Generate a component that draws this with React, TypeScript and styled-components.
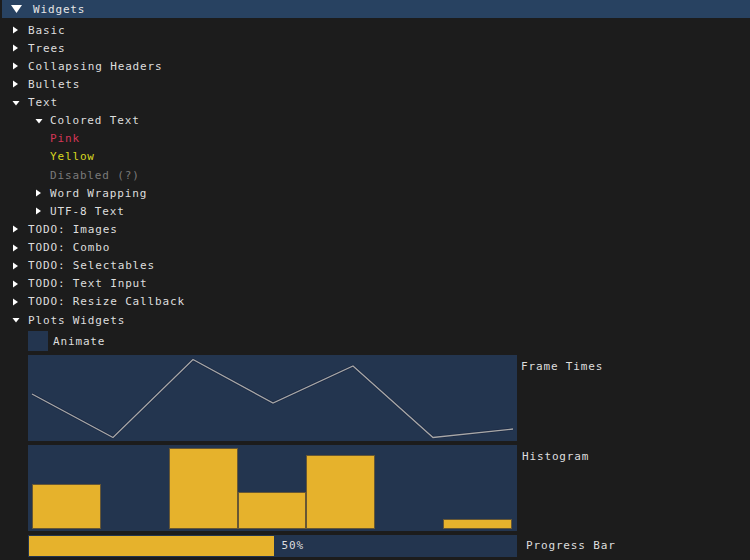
import React from "react";
import styled, { createGlobalStyle } from "styled-components";

const Global = createGlobalStyle`
  html, body { margin: 0; padding: 0; background: #1c1c1c; }
  body { width: 750px; height: 560px; overflow: hidden; }
`;

const Page = styled.div`
  width: 750px;
  height: 560px;
  background: #1c1c1c;
  color: #dedede;
  font-family: "DejaVu Sans Mono", "Liberation Mono", monospace;
  font-size: 11px;
  letter-spacing: 0.85px;
  display: flex;
  flex-direction: column;
  overflow: hidden;
`;

const HeaderBar = styled.div`
  height: 18px;
  margin-left: 2px;
  background: #284261;
  display: flex;
  align-items: center;
  padding-left: 9px;
  gap: 11px;
  color: #e6e6e6;
`;

const TreeList = styled.div`
  padding-top: 3px;
  display: flex;
  flex-direction: column;
`;

const TreeRow = styled.div<{ $indent: number }>`
  height: 18.125px;
  display: flex;
  align-items: center;
  padding-left: ${(p) => p.$indent}px;
  white-space: pre;
`;

const ArrowSlot = styled.span<{ $w: number }>`
  width: ${(p) => p.$w}px;
  height: 8px;
  display: flex;
  align-items: flex-start;
  flex-shrink: 0;
`;

const Label = styled.span<{ $color?: string }>`
  color: ${(p) => p.$color || "#dedede"};
`;

const CheckRow = styled.div`
  margin-top: 2px;
  height: 20px;
  display: flex;
  align-items: center;
  padding-left: 28px;
  gap: 5px;
`;

const CheckBox = styled.div`
  width: 20px;
  height: 20px;
  background: #23354f;
`;

const PlotRow = styled.div<{ $top: number }>`
  margin-top: ${(p) => p.$top}px;
  display: flex;
  padding-left: 28px;
`;

const PlotFrame = styled.div<{ $h: number }>`
  width: 489px;
  height: ${(p) => p.$h}px;
  background: #23354f;
  flex-shrink: 0;
  display: flex;
  align-items: center;
`;

const PlotLabel = styled.div<{ $pad: number; $top?: number }>`
  padding-left: ${(p) => p.$pad}px;
  padding-top: ${(p) => p.$top ?? 5}px;
  line-height: 14px;
  white-space: pre;
`;

const ProgressRow = styled(PlotRow)`
  align-items: center;
`;

const HistArea = styled.div`
  width: 100%;
  height: 100%;
  box-sizing: border-box;
  padding: 3px 5px 2px 4px;
  display: flex;
  align-items: flex-end;
`;

const HistCell = styled.div`
  flex: 1;
  height: 100%;
  display: flex;
  align-items: flex-end;
`;

const HistBar = styled.div`
  width: 100%;
  background: #e6b22c;
  box-shadow: inset 0 0 0 1px rgba(18, 26, 58, 0.6);
`;

const ProgressFill = styled.div`
  height: 20px;
  margin-left: 1px;
  background: #e6b22c;
  align-self: center;
`;

const ProgressText = styled.span`
  margin-left: 8px;
  color: #dedede;
`;

const RightArrow = () => (
  <svg width="8" height="8" viewBox="0 0 8 8">
    <polygon points="1,0.5 6,4 1,7.5" fill="#ffffff" />
  </svg>
);

const DownArrow = () => (
  <svg width="8" height="8" viewBox="0 0 8 8">
    <polygon points="0.5,2 7.5,2 4,6.5" fill="#ffffff" />
  </svg>
);

type Item = { text: string; level: 1 | 2; kind: "closed" | "open" | "leaf"; color?: string };

const items: Item[] = [
  { text: "Basic", level: 1, kind: "closed" },
  { text: "Trees", level: 1, kind: "closed" },
  { text: "Collapsing Headers", level: 1, kind: "closed" },
  { text: "Bullets", level: 1, kind: "closed" },
  { text: "Text", level: 1, kind: "open" },
  { text: "Colored Text", level: 2, kind: "open" },
  { text: "Pink", level: 2, kind: "leaf", color: "#d33656" },
  { text: "Yellow", level: 2, kind: "leaf", color: "#d6d620" },
  { text: "Disabled (?)", level: 2, kind: "leaf", color: "#7a7a7a" },
  { text: "Word Wrapping", level: 2, kind: "closed" },
  { text: "UTF-8 Text", level: 2, kind: "closed" },
  { text: "TODO: Images", level: 1, kind: "closed" },
  { text: "TODO: Combo", level: 1, kind: "closed" },
  { text: "TODO: Selectables", level: 1, kind: "closed" },
  { text: "TODO: Text Input", level: 1, kind: "closed" },
  { text: "TODO: Resize Callback", level: 1, kind: "closed" },
  { text: "Plots Widgets", level: 1, kind: "open" },
];

const linePoints = [
  [4, 39],
  [85, 82.5],
  [165, 4.5],
  [245, 48],
  [325, 11],
  [405, 82.5],
  [485, 74],
];

const histValues = [0.555, 0, 1.0, 0.456, 0.913, 0, 0.12];

export default function App() {
  const pts = linePoints.map((p) => p.join(",")).join(" ");
  return (
    <Page>
      <Global />
      <HeaderBar>
        <svg width="11" height="8" viewBox="0 0 11 8">
          <polygon points="0,0 11,0 5.5,8" fill="#ffffff" />
        </svg>
        <Label $color="#e6e6e6">Widgets</Label>
      </HeaderBar>
      <TreeList>
        {items.map((it) => {
          const indent = it.kind === "leaf" ? 50 : it.level === 1 ? 12 : 35;
          const slot = it.level === 1 ? 16 : 15;
          return (
            <TreeRow key={it.text} $indent={indent}>
              {it.kind !== "leaf" && (
                <ArrowSlot $w={slot}>{it.kind === "open" ? <DownArrow /> : <RightArrow />}</ArrowSlot>
              )}
              <Label $color={it.color}>{it.text}</Label>
            </TreeRow>
          );
        })}
      </TreeList>
      <CheckRow>
        <CheckBox />
        <Label>Animate</Label>
      </CheckRow>
      <PlotRow $top={4}>
        <PlotFrame $h={85.5}>
          <svg width="489" height="85.5" viewBox="0 0 489 85.5">
            <polyline points={pts} fill="none" stroke="#15203a" strokeOpacity="0.6" strokeWidth="2.6" />
            <polyline points={pts} fill="none" stroke="#a8a8a8" strokeWidth="1.3" />
          </svg>
        </PlotFrame>
        <PlotLabel $pad={4}>Frame Times</PlotLabel>
      </PlotRow>
      <PlotRow $top={4.5}>
        <PlotFrame $h={85.5}>
          <HistArea>
            {histValues.map((v, i) => (
              <HistCell key={i}>{v > 0 && <HistBar style={{ height: `${v * 100}%` }} />}</HistCell>
            ))}
          </HistArea>
        </PlotFrame>
        <PlotLabel $pad={5}>Histogram</PlotLabel>
      </PlotRow>
      <ProgressRow $top={4.5}>
        <PlotFrame $h={21.5}>
          <ProgressFill style={{ width: "50%" }} />
          <ProgressText>50%</ProgressText>
        </PlotFrame>
        <PlotLabel $pad={9} $top={1}>Progress Bar</PlotLabel>
      </ProgressRow>
    </Page>
  );
}
